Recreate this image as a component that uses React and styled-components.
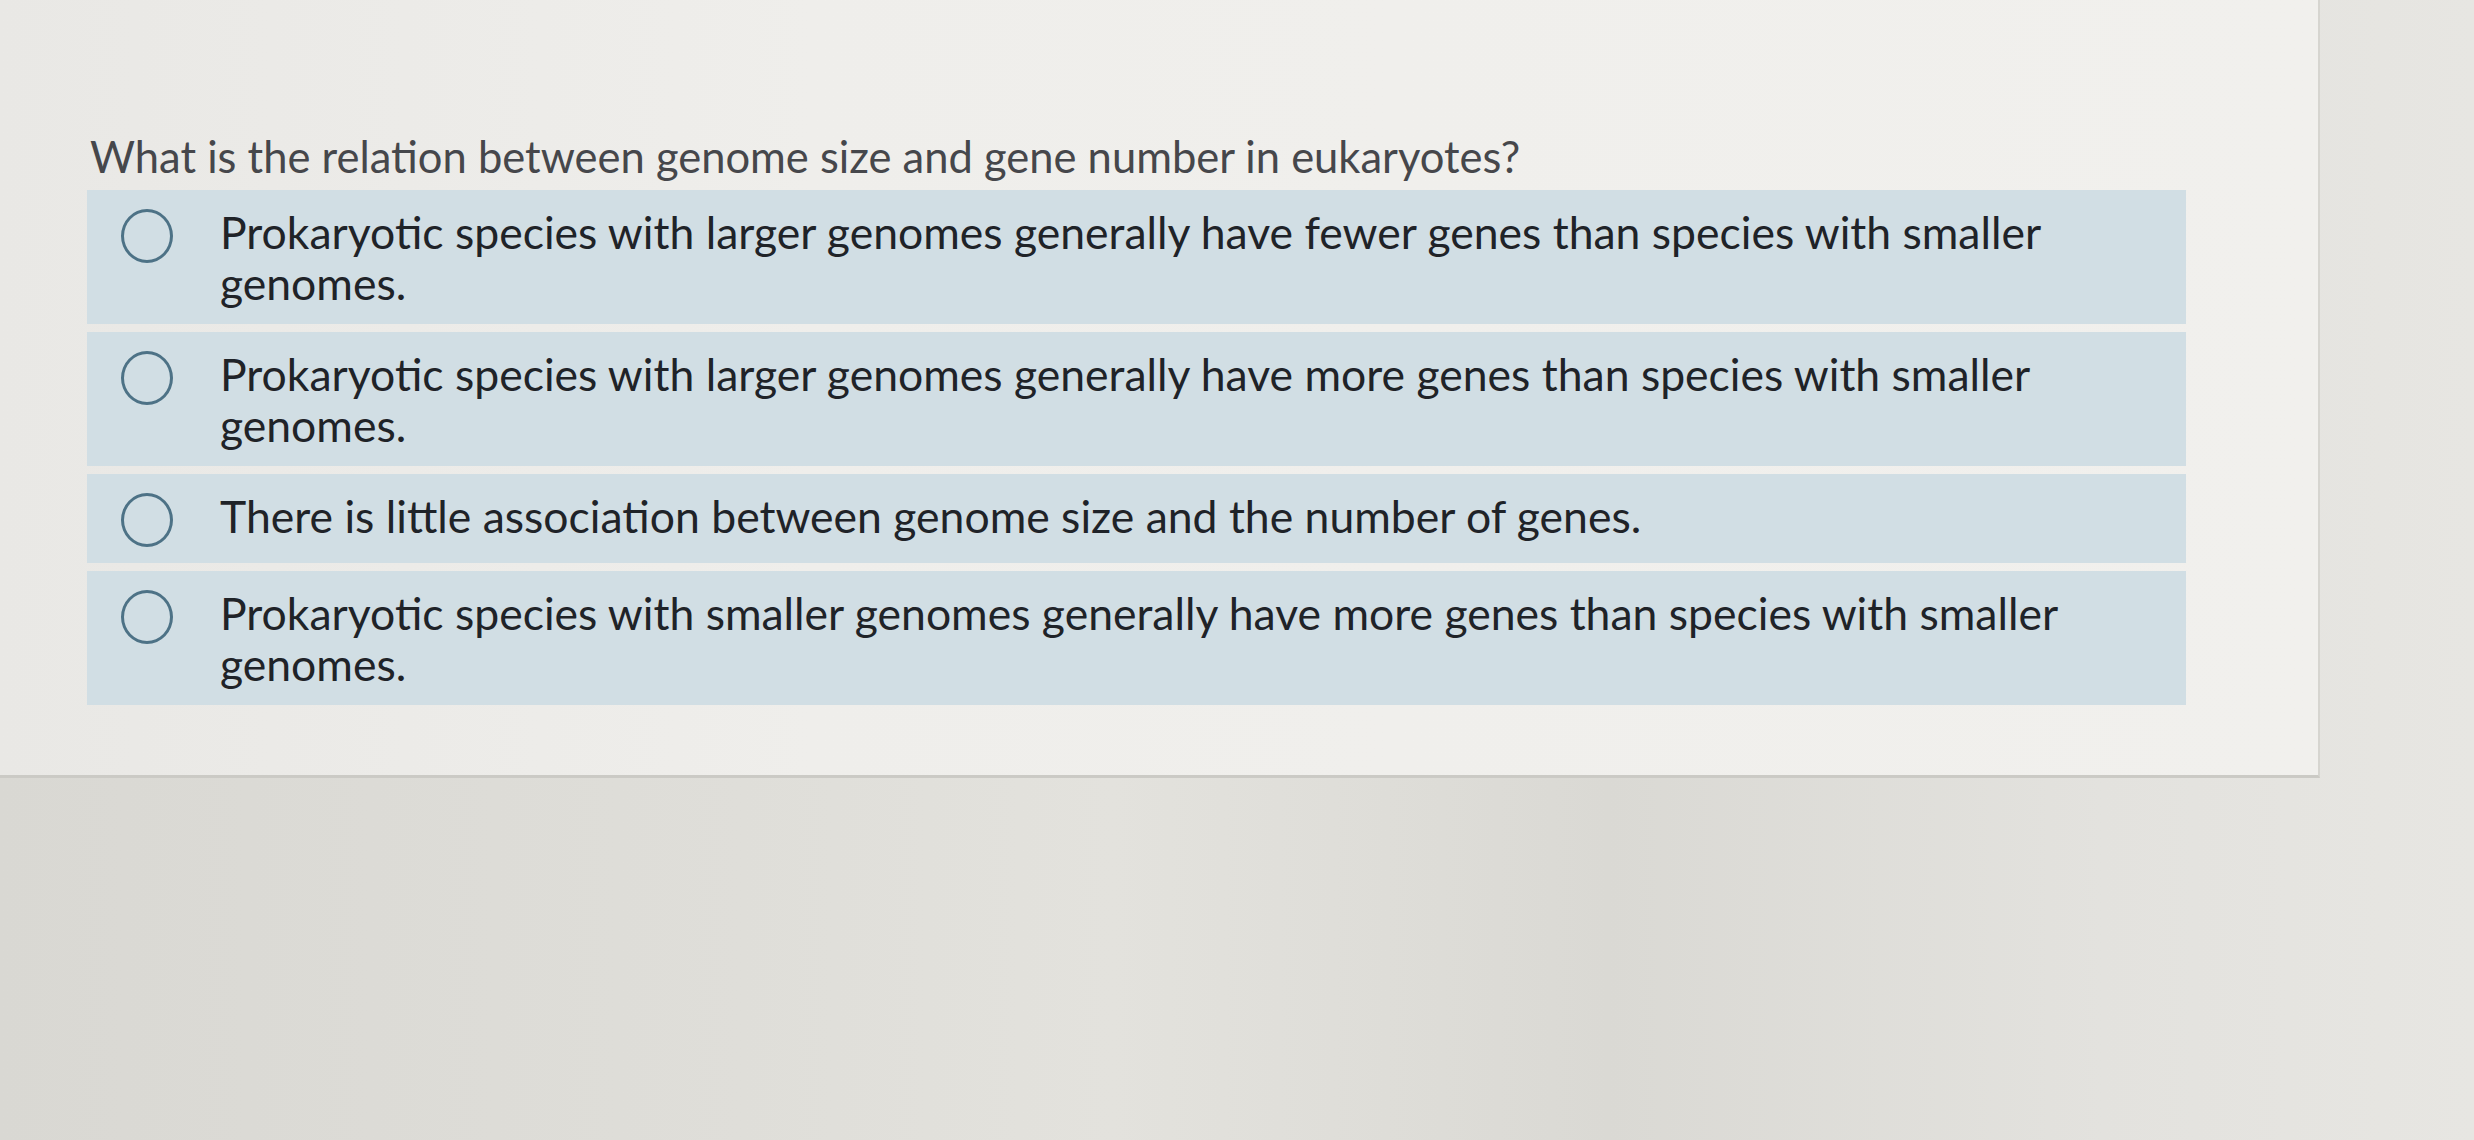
import React from 'react';
import styled, { createGlobalStyle } from 'styled-components';

const GlobalStyle = createGlobalStyle`
  html, body { margin: 0; padding: 0; }
  body {
    background: #dddcd7;
    font-family: Lato, "Open Sans", sans-serif;
  }
`;

const Page = styled.div`
  width: 2474px;
  height: 1140px;
  overflow: hidden;
  background: linear-gradient(90deg, #d9d8d3 0%, #dfded9 30%, #e3e2dd 45%, #dad9d4 65%, #e3e2de 85%, #e7e6e2 100%);
`;

const Card = styled.div`
  width: 2320px;
  height: 778px;
  box-sizing: border-box;
  background: linear-gradient(90deg, #e9e8e5 0%, #efeeeb 35%, #f0efec 60%, #f1f0ed 100%);
  border-right: 2px solid #d6d5d0;
  border-bottom: 3px solid #cbcac5;
  padding: 130px 0 0 87px;
`;

const Question = styled.h2`
  margin: 0 0 8px 3px;
  font-size: 43.5px;
  line-height: 52px;
  font-weight: 400;
  color: #46474b;
`;

const Options = styled.div`
  width: 2099px;
  display: flex;
  flex-direction: column;
  gap: 8px;
`;

const Option = styled.label`
  display: flex;
  align-items: flex-start;
  padding: 16px 0;
  background: #d1dee4;
  cursor: pointer;
`;

const Radio = styled.span`
  flex: none;
  width: 52px;
  height: 54px;
  margin: 3px 47px 0 34px;
  box-sizing: border-box;
  border: 3px solid #4d7286;
  border-radius: 50%;
`;

const Text = styled.span`
  flex: 1;
  padding-right: 60px;
  font-size: 44.5px;
  line-height: 51px;
  color: #1f2328;
`;

const answers = [
  'Prokaryotic species with larger genomes generally have fewer genes than species with smaller genomes.',
  'Prokaryotic species with larger genomes generally have more genes than species with smaller genomes.',
  'There is little association between genome size and the number of genes.',
  'Prokaryotic species with smaller genomes generally have more genes than species with smaller genomes.',
];

export default function App() {
  return (
    <Page>
      <GlobalStyle />
      <Card>
        <Question>What is the relation between genome size and gene number in eukaryotes?</Question>
        <Options>
          {answers.map((a) => (
            <Option key={a}>
              <Radio />
              <Text>{a}</Text>
            </Option>
          ))}
        </Options>
      </Card>
    </Page>
  );
}
